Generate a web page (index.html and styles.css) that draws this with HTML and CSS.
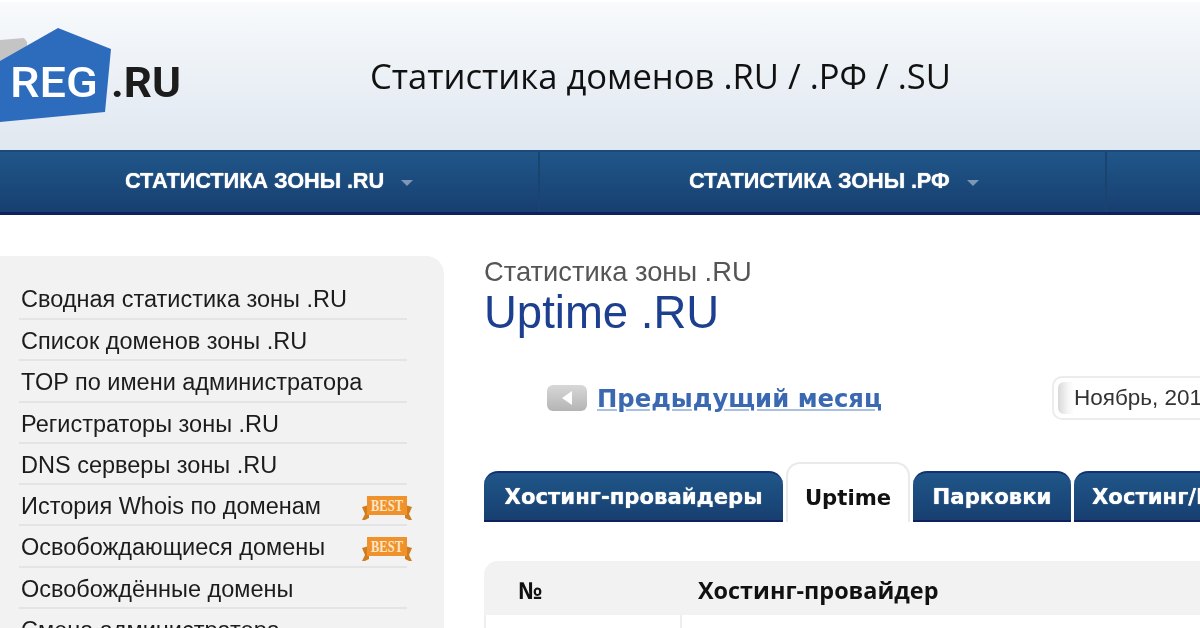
FILE: index.html
```html
<!DOCTYPE html>
<html lang="ru">
<head>
<meta charset="utf-8">
<title>Статистика доменов</title>
<link rel="stylesheet" href="styles.css">
</head>
<body>
<div class="page">
  <header class="masthead">
    <svg class="logo" width="190" height="124" viewBox="0 0 190 124" aria-label="REG.RU">
      <path d="M0 40 L24 38 L27 42 L27 50 L0 66 Z" fill="#c4c4c4"/>
      <path d="M0 61 L58 28 L111 49 L105 112 L0 122 Z" fill="#2d6cbd"/>
      <text class="logo-reg" x="10" y="97" textLength="88" lengthAdjust="spacingAndGlyphs">REG</text>
      <text class="logo-ru" x="111" y="97" textLength="70" lengthAdjust="spacingAndGlyphs">.RU</text>
    </svg>
    <h1 class="site-title">Статистика доменов .RU / .РФ / .SU</h1>
  </header>

  <nav class="topnav">
    <div class="topnav-item first"><span>СТАТИСТИКА ЗОНЫ .RU</span><i class="caret"></i></div>
    <div class="topnav-item second"><span>СТАТИСТИКА ЗОНЫ .РФ</span><i class="caret"></i></div>
  </nav>

  <main class="layout">
    <aside class="sidebar">
      <ul class="side-list">
        <li>Сводная статистика зоны .RU</li>
        <li>Список доменов зоны .RU</li>
        <li>TOP по имени администратора</li>
        <li>Регистраторы зоны .RU</li>
        <li>DNS серверы зоны .RU</li>
        <li>История Whois по доменам
          <svg class="best" width="50" height="25" viewBox="0 0 50 25"><path d="M0 11 L7 9 L7 22 L3 24 L0 24 L3 18 Z M50 11 L43 9 L43 22 L47 24 L50 24 L47 18 Z" fill="#cf7d1f"/><rect x="5" y="0" width="40" height="19" fill="#f0922c"/><text class="best-text" x="9" y="15" textLength="32" lengthAdjust="spacingAndGlyphs">BEST</text></svg>
        </li>
        <li>Освобождающиеся домены
          <svg class="best" width="50" height="25" viewBox="0 0 50 25"><path d="M0 11 L7 9 L7 22 L3 24 L0 24 L3 18 Z M50 11 L43 9 L43 22 L47 24 L50 24 L47 18 Z" fill="#cf7d1f"/><rect x="5" y="0" width="40" height="19" fill="#f0922c"/><text class="best-text" x="9" y="15" textLength="32" lengthAdjust="spacingAndGlyphs">BEST</text></svg>
        </li>
        <li>Освобождённые домены</li>
        <li>Смена администратора</li>
      </ul>
    </aside>

    <section class="content">
      <div class="crumb">Статистика зоны .RU</div>
      <h2 class="page-title">Uptime .RU</h2>

      <div class="period">
        <div class="prev">
          <span class="prev-btn"><svg width="12" height="14" viewBox="0 0 12 14"><path d="M11 0 V14 L1 7 Z" fill="#fff"/></svg></span>
          <a class="prev-link" href="#">Предыдущий месяц</a>
        </div>
        <div class="date-box"><div class="date-inner">Ноябрь, 2015</div></div>
      </div>

      <div class="tabs">
        <div class="tab t1">Хостинг-провайдеры</div>
        <div class="tab active">Uptime</div>
        <div class="tab t3">Парковки</div>
        <div class="tab t4">Хостинг/Регистраторы</div>
      </div>

      <div class="table">
        <div class="thead"><div class="th num">№</div><div class="th">Хостинг-провайдер</div></div>
        <div class="tbody"><div class="td-num"></div></div>
      </div>
    </section>
  </main>
</div>
</body>
</html>
```
FILE: styles.css
```css
* { box-sizing: border-box; }
html, body { margin: 0; padding: 0; background: #fff; }
body { font-family: "Liberation Sans", Arial, sans-serif; color: #222; }
.page { width: 1200px; height: 628px; overflow: hidden; filter: blur(0.55px); }

.masthead {
  height: 150px;
  position: relative;
  border-top: 2px solid #fff;
  background: linear-gradient(#f8fafc, #dfe7f0);
  display: flex;
  align-items: flex-start;
}
.logo { flex: none; margin-top: -2px; }
.logo-reg { font: 500 42px "Roboto", sans-serif; fill: #fff; }
.logo-ru { font: 700 42px "Roboto", sans-serif; fill: #1c1c1c; }
.site-title {
  margin: 52px 0 0 180px;
  font: 400 34.6px/44px "Open Sans", sans-serif;
  color: #111;
  white-space: nowrap;
}

.topnav {
  height: 65px;
  display: flex;
  background: linear-gradient(#205689, #173f70);
  border-top: 2px solid #1c4a78;
  border-bottom: 3px solid #101f60;
}
.topnav-item {
  height: 60px;
  display: flex;
  align-items: center;
  color: #fff;
  font: 700 21.8px "Liberation Sans", sans-serif;
  letter-spacing: -0.1px;
  text-shadow: 0 0 1px #fff;
  white-space: nowrap;
  border-right: 2px solid #1a4470;
  padding-bottom: 2px;
}
.topnav-item.first { width: 540px; padding-left: 125px; }
.topnav-item.second { width: 567px; padding-left: 149px; }
.caret {
  margin: 4px 0 0 17px;
  border-left: 6px solid transparent;
  border-right: 6px solid transparent;
  border-top: 6px solid #7d97b5;
}

.layout {
  display: grid;
  grid-template-columns: 444px 1fr;
  column-gap: 40px;
  padding-top: 41px;
}
.sidebar {
  height: 400px;
  background: #f2f2f2;
  border-top-right-radius: 18px;
  padding: 23px 0 0 19px;
}
.side-list { list-style: none; margin: 0; padding: 0; width: 388px; }
.side-list li {
  height: 41.25px;
  position: relative;
  padding: 9px 0 0 2px;
  font-size: 23.5px;
  line-height: 24px;
  color: #1c1c1c;
  white-space: nowrap;
  border-bottom: 2px solid #e4e4e4;
}
.side-list li:first-child { height: 41px; padding-top: 8px; }
.best { position: absolute; right: -5px; top: 11px; }
.best-text { font: 700 16px "Liberation Serif", serif; fill: #fde6c8; }

.content { min-width: 0; }
.crumb { margin-top: 2px; font-size: 27.3px; line-height: 28px; color: #555; white-space: nowrap; }
.page-title {
  margin: 1px 0 0;
  font: 400 45.5px/52px "Liberation Sans", sans-serif;
  color: #1c3f8f;
  white-space: nowrap;
}

.period { display: flex; align-items: center; height: 44px; margin-top: 37px; }
.prev { flex: none; width: 568px; padding-left: 63px; display: flex; align-items: center; gap: 10px; }
.prev-btn {
  flex: none;
  width: 40px; height: 26px; border-radius: 6px;
  background: linear-gradient(#d8d8d8, #b4b4b4);
  display: flex; align-items: center; justify-content: center;
}
.prev-link {
  font: 700 24.3px "DejaVu Sans", sans-serif;
  color: #3a69b2;
  text-decoration: underline;
  text-decoration-color: #a9c0e0;
  white-space: nowrap;
}
.date-box {
  flex: none;
  width: 200px; height: 44px; padding: 4px;
  border: 2px solid #ececec;
  border-radius: 10px;
}
.date-inner {
  height: 32px;
  padding-left: 16px;
  border-radius: 6px;
  background: linear-gradient(90deg, #d8d8d8, #f6f6f6 10px, #fff 16px);
  font: 400 22.5px/32px "Liberation Sans", sans-serif;
  color: #333;
  white-space: nowrap;
}

.tabs { display: flex; align-items: flex-end; height: 60px; margin-top: 42px; gap: 3px; }
.tab {
  flex: none;
  height: 51px;
  border-radius: 14px 14px 0 0;
  background: linear-gradient(#205689, #173f70);
  border-top: 2px solid #122f78;
  border-bottom: 2px solid #101f60;
  color: #fff;
  font: 700 21.2px/47px "DejaVu Sans", sans-serif;
  text-shadow: 0 0 1px #fff;
  text-align: center;
  white-space: nowrap;
  overflow: hidden;
}
.t1 { width: 299px; }
.t3 { width: 158px; }
.t4 { width: 300px; padding-left: 18px; text-align: left; }
.tab.active {
  width: 124px; height: 60px;
  background: #fff;
  border: 2px solid #eaeaea;
  border-bottom: 0;
  color: #111;
  text-shadow: none;
  line-height: 68px;
}

.table { margin-top: 39px; }
.thead {
  height: 54px;
  background: #f2f2f2;
  border-top-left-radius: 14px;
  display: flex;
  align-items: center;
  padding-top: 4px;
}
.th { font: 700 23.4px "Open Sans", sans-serif; color: #111; white-space: nowrap; }
.th.num { width: 214px; padding-left: 34px; }
.tbody { height: 20px; border-left: 2px solid #eee; }
.td-num { width: 196px; height: 20px; border-right: 2px solid #eee; }
```
